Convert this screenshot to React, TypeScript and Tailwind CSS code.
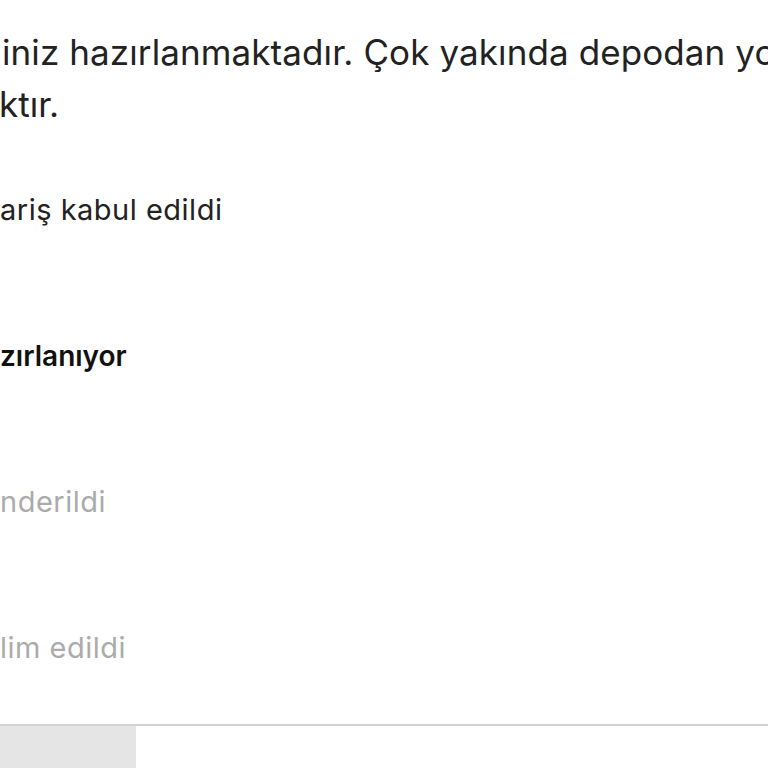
export default function App() {
  const steps = [
    { label: "ariş kabul edildi", state: "done" },
    { label: "zırlanıyor", state: "current" },
    { label: "nderildi", state: "pending" },
    { label: "lim edildi", state: "pending" },
  ]

  return (
    <div
      className="h-[768px] w-[768px] overflow-hidden bg-white text-[#222222]"
      style={{ fontFamily: "Inter, 'Noto Sans', sans-serif" }}
    >
      {/* message */}
      <div className="pt-[26px] pl-[2px]">
        <p className="whitespace-nowrap text-[35px] leading-[52px] tracking-[0.1px]">
          iniz hazırlanmaktadır. Çok yakında depodan yola çıkacaktır.
        </p>
        <p className="whitespace-nowrap text-[35px] leading-[52px] -ml-[3px]">
          ktır.
        </p>
      </div>

      {/* steps */}
      <div className="mt-[62px] flex flex-col gap-[110px]">
        {steps.map((s) => (
          <div
            key={s.label}
            className={
              s.state === "current"
                ? "text-[28px] leading-[36px] font-semibold text-[#111111]"
                : s.state === "done"
                  ? "text-[29px] leading-[36px] tracking-[0.5px] text-[#222222]"
                  : "text-[29px] leading-[36px] tracking-[0.5px] text-[#ababab]"
            }
          >
            {s.label}
          </div>
        ))}
      </div>

      {/* footer */}
      <div className="mt-[58px] h-[2px] bg-[#d2d2d2]" />
      <div className="flex">
        <div className="h-[60px] w-[136px] bg-[#e4e5e4]" />
        <div className="flex-1" />
      </div>
    </div>
  )
}
